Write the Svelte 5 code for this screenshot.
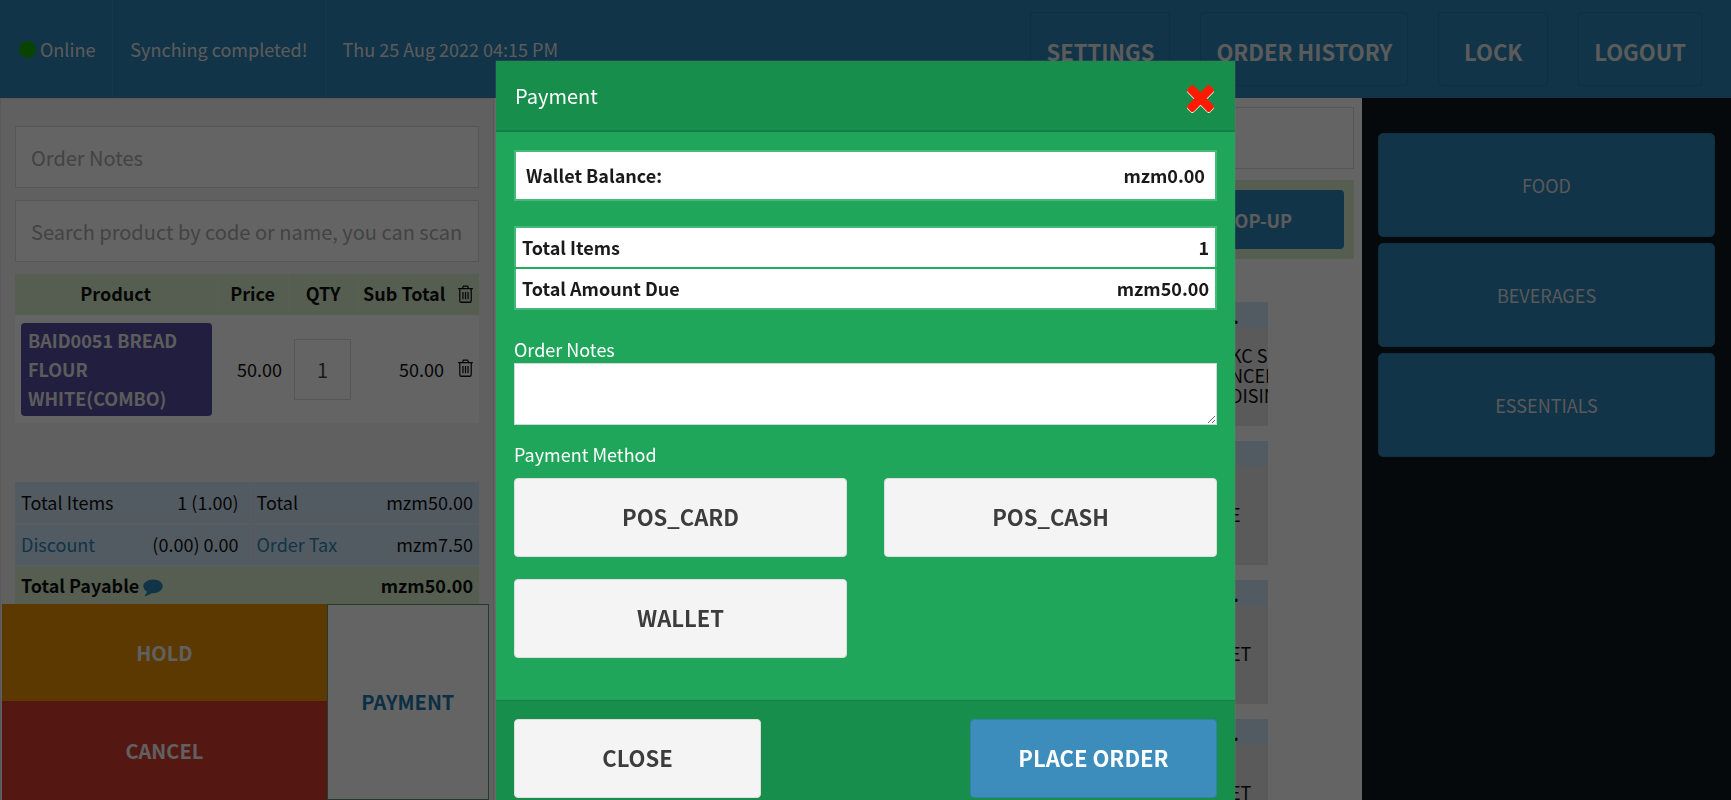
<script>
  const headerButtons = ['SETTINGS', 'ORDER HISTORY', 'LOCK', 'LOGOUT'];
  const categories = ['FOOD', 'BEVERAGES', 'ESSENTIALS'];
  const methods = ['POS_CARD', 'POS_CASH', 'WALLET'];

  const products = [
    { mark: '.', lines: ['KC S', 'NCEN', 'DISIN'] },
    { mark: '', lines: ['E'] },
    { mark: '.', lines: ['ET'] },
    { mark: '.', lines: ['ET'] }
  ];

  let open = $state(true);
  let method = $state('');
  let qty = $state('1');
  let notes = $state('');
</script>

<svelte:head>
  <title>Payment</title>
</svelte:head>

{#snippet trash()}
  <svg class="trash" viewBox="0 0 14 17" aria-hidden="true">
    <path d="M0 3.500h14M4 3.500 5 1h4l1 2.500M1.600 3.500v11.300q0 1.500 1.400 1.500h8q1.400 0 1.400-1.500V3.500M4.600 6.500v7M7 6.500v7M9.400 6.500v7" />
  </svg>
{/snippet}

<div class="pos">
  <header class="topbar">
    <div class="status"><span class="dot"></span>Online</div>
    <div class="status">Synching completed!</div>
    <div class="status">Thu 25 Aug 2022 04:15 PM</div>
    <nav class="actions">
      {#each headerButtons as label}
        <button>{label}</button>
      {/each}
    </nav>
  </header>

  <main class="columns">
    <section class="cart">
      <div class="cart-body">
        <input class="field" type="text" placeholder="Order Notes" aria-label="Order Notes" />
        <input class="field" type="text" placeholder="Search product by code or name, you can scan" aria-label="Search product" />

        <table class="items">
          <thead>
            <tr>
              <th class="c-product">Product</th>
              <th class="c-price">Price</th>
              <th class="c-qty">QTY</th>
              <th class="c-sub">Sub Total</th>
              <th class="c-del">{@render trash()}</th>
            </tr>
          </thead>
          <tbody>
            <tr>
              <td><button class="product-name">BAID0051 BREAD FLOUR WHITE(COMBO)</button></td>
              <td class="num">50.00</td>
              <td><input class="qty" type="text" bind:value={qty} aria-label="QTY" /></td>
              <td class="num">50.00</td>
              <td class="c-del"><button class="icon-btn" aria-label="Delete">{@render trash()}</button></td>
            </tr>
          </tbody>
        </table>
      </div>

      <table class="totals">
        <tbody>
          <tr>
            <td class="t-label">Total Items</td>
            <td class="t-count">1 (1.00)</td>
            <td>Total</td>
            <td class="num">mzm50.00</td>
          </tr>
          <tr>
            <td><a href="#discount">Discount</a></td>
            <td class="t-count">(0.00) 0.00</td>
            <td><a href="#tax">Order Tax</a></td>
            <td class="num">mzm7.50</td>
          </tr>
          <tr class="payable">
            <td colspan="2">
              Total Payable
              <svg class="comment" viewBox="0 128 1792 1664" aria-hidden="true">
                <path d="M1792 896q0 174-120 321.500t-326 233-450 85.500q-70 0-145-8-198 175-460 242-49 14-114 22-17 2-30.500-9t-17.500-29v-1q-3-4-.5-12t2-10 4.500-9.500l6-9 7-8.500 8-9q7-8 31-34.500t34.500-38 31-39.500 32.500-51 27-59 26-76q-157-89-247.500-220t-90.500-281q0-130 71-248.500t191-204.500 286-136.500 348-50.500q244 0 450 85.500t326 233 120 321.500z" />
              </svg>
            </td>
            <td colspan="2" class="num">mzm50.00</td>
          </tr>
        </tbody>
      </table>

      <div class="cart-actions">
        <button class="hold">HOLD</button>
        <button class="cancel">CANCEL</button>
        <button class="pay" onclick={() => (open = true)}>PAYMENT</button>
      </div>
    </section>

    <section class="catalog">
      <input class="field" type="text" aria-label="Customer" />
      <div class="wallet-bar"><button>TOP-UP</button></div>
      <div class="products">
        {#each products as product}
          <article class="product">
            <div class="product-head">{product.mark}</div>
            <div class="product-body">
              {#each product.lines as line}
                <span>{line}</span>
              {/each}
            </div>
          </article>
        {/each}
      </div>
    </section>

    <aside class="categories">
      {#each categories as category}
        <button>{category}</button>
      {/each}
    </aside>
  </main>
</div>

{#if open}
  <div class="backdrop">
    <div class="modal" role="dialog" aria-modal="true" aria-labelledby="modal-title">
      <div class="modal-header">
        <h4 id="modal-title">Payment</h4>
        <button class="close-x" aria-label="Close" onclick={() => (open = false)}>
          <svg viewBox="302 366 1188 1230" aria-hidden="true">
            <path fill="#fff" transform="translate(0 42)" d="M1490 1322q0 40-28 68l-136 136q-28 28-68 28t-68-28l-294-294-294 294q-28 28-68 28t-68-28l-136-136q-28-28-28-68t28-68l294-294-294-294q-28-28-28-68t28-68l136-136q28-28 68-28t68 28l294 294 294-294q28-28 68-28t68 28l136 136q28 28 28 68t-28 68l-294 294 294 294q28 28 28 68z" />
            <path fill="#ff1a00" d="M1490 1322q0 40-28 68l-136 136q-28 28-68 28t-68-28l-294-294-294 294q-28 28-68 28t-68-28l-136-136q-28-28-28-68t28-68l294-294-294-294q-28-28-28-68t28-68l136-136q28-28 68-28t68 28l294 294 294-294q28-28 68-28t68 28l136 136q28 28 28 68t-28 68l-294 294 294 294q28 28 28 68z" />
          </svg>
        </button>
      </div>

      <div class="modal-body">
        <table class="summary wallet">
          <tbody>
            <tr><th>Wallet Balance:</th><td>mzm0.00</td></tr>
          </tbody>
        </table>
        <table class="summary">
          <tbody>
            <tr><th>Total Items</th><td>1</td></tr>
            <tr><th>Total Amount Due</th><td>mzm50.00</td></tr>
          </tbody>
        </table>

        <label for="order-notes">Order Notes</label>
        <textarea id="order-notes" bind:value={notes}></textarea>

        <div class="method-title">Payment Method</div>
        <div class="methods">
          {#each methods as name}
            <button class="btn" aria-pressed={method === name} onclick={() => (method = name)}>{name}</button>
          {/each}
        </div>
      </div>

      <div class="modal-footer">
        <button class="btn" onclick={() => (open = false)}>CLOSE</button>
        <button class="btn primary">PLACE ORDER</button>
      </div>
    </div>
  </div>
{/if}

<style>
  :global(body) {
    font-family: "Noto Sans CJK SC", "Noto Sans", sans-serif;
    font-size: 18px;
    line-height: 28px;
    color: #111;
    background: #fff;
    overflow: hidden;
  }

  * { box-sizing: border-box; }

  button, input, textarea {
    font: inherit;
    color: inherit;
    margin: 0;
  }
  button { cursor: pointer; }

  .pos {
    display: flex;
    flex-direction: column;
    height: 100vh;
  }

  .topbar {
    display: flex;
    flex: none;
    height: 98px;
    background: #2b82b4;
    color: #e4e4e4;
  }
  .status {
    display: flex;
    align-items: center;
    gap: 4px;
    padding: 0 17px;
    border-right: 1px solid #3a8ab8;
  }
  .status:first-child { padding-left: 19px; }
  .status:nth-child(3) { border-right: none; }
  .dot {
    width: 17px;
    height: 17px;
    border-radius: 50%;
    background: #18a800;
  }
  .actions {
    display: flex;
    gap: 30px;
    margin-left: auto;
    padding: 12px 29px 12px 0;
  }
  .actions button {
    min-width: 110px;
    padding: 4px 15px 0;
    font-size: 22px;
    font-weight: 700;
    background: none;
    border: 1px solid #2478a6;
    border-radius: 4px;
  }

  .columns {
    flex: 1;
    min-height: 0;
    display: grid;
    grid-template-columns: 494fr 868fr 369fr;
  }

  .field {
    display: block;
    width: 100%;
    height: 62px;
    padding: 0 15px;
    font-size: 20px;
    color: #555;
    background: #fafafa;
    border: 1px solid #d2d6de;
  }
  .field::placeholder { color: #a8a8a8; }

  .cart {
    display: flex;
    flex-direction: column;
    min-height: 0;
    background: #f0f0f0;
    border: 1px solid #dfdfdf;
    border-bottom: none;
  }
  .cart-body {
    flex: 1;
    padding: 27px 14px 0;
  }
  .cart-body .field { margin-bottom: 12px; }

  table { border-collapse: collapse; }

  .items {
    width: 100%;
    table-layout: fixed;
    background: #fafafa;
  }
  .items th {
    height: 41px;
    padding: 0 0 3px;
    background: #d7ebca;
    border-right: 1px solid #dbedd0;
  }
  .items th.c-sub, .items th.c-del { border-right: none; }
  .items td { padding: 8px 6px 7px; }
  .items td.num { padding-bottom: 9px; }
  .c-product { width: 202px; }
  .c-price { width: 71px; }
  .c-qty { width: 70px; }
  .c-del { width: 29px; }
  .items td.c-del, .items th.c-del { padding: 0 7px 2px 8px; }
  .num { text-align: right; }

  .product-name {
    display: block;
    width: 191px;
    padding: 3px 7px;
    font-weight: 700;
    line-height: 29px;
    text-align: left;
    color: #e6e6e6;
    background: #534b9e;
    border: none;
    border-radius: 4px;
  }
  .qty {
    display: block;
    width: 57px;
    height: 61px;
    text-align: center;
    font-size: 20px;
    color: #444;
    background: #fafafa;
    border: 1px solid #d2d6de;
  }
  .icon-btn {
    display: block;
    padding: 0;
    background: none;
    border: none;
  }
  .trash {
    display: block;
    width: 15px;
    height: 18px;
    fill: none;
    stroke: #111;
    stroke-width: 1.2;
  }

  .totals {
    margin: 0 14px;
  }
  .totals td {
    height: 42px;
    padding: 0 6px 2px;
    background: #d0e4f5;
    border-bottom: 2px solid #dce9f4;
  }
  .totals .t-label { width: 114px; }
  .totals .t-count {
    width: 121px;
    padding-right: 11px;
    text-align: right;
    border-right: 1px solid #d8e7f5;
  }
  .totals a {
    color: #2b82b4;
    text-decoration: none;
  }
  .totals .payable td {
    height: 38px;
    font-weight: 700;
    background: #d7ebca;
    border-bottom: none;
  }
  .comment {
    width: 20px;
    height: 18px;
    vertical-align: -3px;
    fill: #2b82b4;
  }

  .cart-actions {
    flex: none;
    display: grid;
    grid-template-columns: 2fr 1fr;
    grid-template-rows: 97px 99px;
    margin: 0 4px 0 1px;
  }
  .cart-actions button {
    font-size: 20px;
    font-weight: 700;
    color: #f0f0f0;
    border: none;
  }
  .cart-actions .hold { background: #e68f00; }
  .cart-actions .cancel {
    grid-row: 2;
    background: #d53a2d;
  }
  .cart-actions .pay {
    grid-column: 2;
    grid-row: 1 / 3;
    color: #1d76ab;
    background: #fafafa;
    border: 1px solid #4f9a66;
  }

  .catalog {
    min-height: 0;
    overflow: hidden;
    padding: 9px 8px 0;
    background: #fafafa;
  }
  .wallet-bar {
    display: flex;
    justify-content: flex-end;
    margin-top: 11px;
    padding: 10px;
    background: #d7ebca;
  }
  .wallet-bar button {
    width: 172px;
    height: 59px;
    font-weight: 700;
    color: #e6e6e6;
    background: #2b82b4;
    border: none;
    border-radius: 4px;
  }
  .products {
    display: grid;
    justify-content: end;
    gap: 15px;
    margin-top: 43px;
    padding-right: 86px;
  }
  .product {
    width: 44px;
    overflow: hidden;
  }
  .product-head {
    height: 25px;
    padding-left: 9px;
    font-weight: 700;
    background: #d0e4f5;
  }
  .product-body {
    display: flex;
    flex-direction: column;
    justify-content: center;
    height: 99px;
    padding: 0 0 3px 6px;
    line-height: 20px;
    white-space: nowrap;
    background: #e0e0e0;
  }

  .categories {
    display: flex;
    flex-direction: column;
    gap: 6px;
    padding: 35px 16px 0;
    background: #0e1720;
  }
  .categories button {
    height: 104px;
    color: #dedede;
    background: #2b82b4;
    border: 1px solid #2478a6;
    border-radius: 5px;
  }

  .backdrop {
    position: fixed;
    inset: 0;
    overflow: hidden;
    background: rgba(0, 0, 0, 0.6);
  }
  .modal {
    width: 739px;
    max-width: 96%;
    margin: 61px auto 0;
    color: #fff;
    background: #1fa65a;
    box-shadow: 0 0 1px #888;
  }
  .modal-header {
    display: flex;
    justify-content: space-between;
    align-items: center;
    height: 71px;
    padding: 0 21px 0 19px;
    background: #178e4b;
    border-bottom: 2px solid #167f45;
  }
  h4 {
    margin: 0;
    font-size: 20px;
    font-weight: 400;
  }
  .close-x {
    padding: 6px 0 0;
    background: none;
    border: none;
  }
  .close-x svg {
    display: block;
    width: 27px;
    height: 28px;
  }
  .modal-body {
    padding: 18px 18px 42px;
  }
  .summary {
    width: 100%;
    margin-bottom: 25px;
    color: #1a1a1a;
    font-weight: 700;
    background: #fff;
    border: 2px solid #45b87a;
  }
  .summary th, .summary td {
    height: 41px;
    padding: 0 6px 2px;
  }
  .summary tr + tr { border-top: 2px solid #1fae5f; }
  .summary th { text-align: left; }
  .summary td { text-align: right; }
  .wallet th, .wallet td {
    height: 49px;
    padding: 0 10px 2px;
  }
  label { display: block; }
  textarea {
    display: block;
    width: 100%;
    height: 62px;
    padding: 8px 12px;
    color: #333;
    background: #fff;
    border: 1px solid #d2d6de;
    resize: vertical;
  }
  .method-title { margin: 15px 0 10px; }
  .methods {
    display: grid;
    grid-template-columns: 1fr 1fr;
    gap: 22px 37px;
  }
  .btn {
    height: 79px;
    padding: 0 0 3px;
    font-size: 22px;
    font-weight: 700;
    color: #3c3c3c;
    background: #f4f4f4;
    border: 1px solid #ddd;
    border-radius: 4px;
  }
  .modal-footer {
    display: flex;
    justify-content: space-between;
    padding: 18px;
    background: #178e4b;
    border-top: 1px solid #167f45;
  }
  .modal-footer .btn { width: 247px; }
  .btn.primary {
    color: #fff;
    background: #3c8dbc;
    border-color: #367fa9;
  }
</style>
